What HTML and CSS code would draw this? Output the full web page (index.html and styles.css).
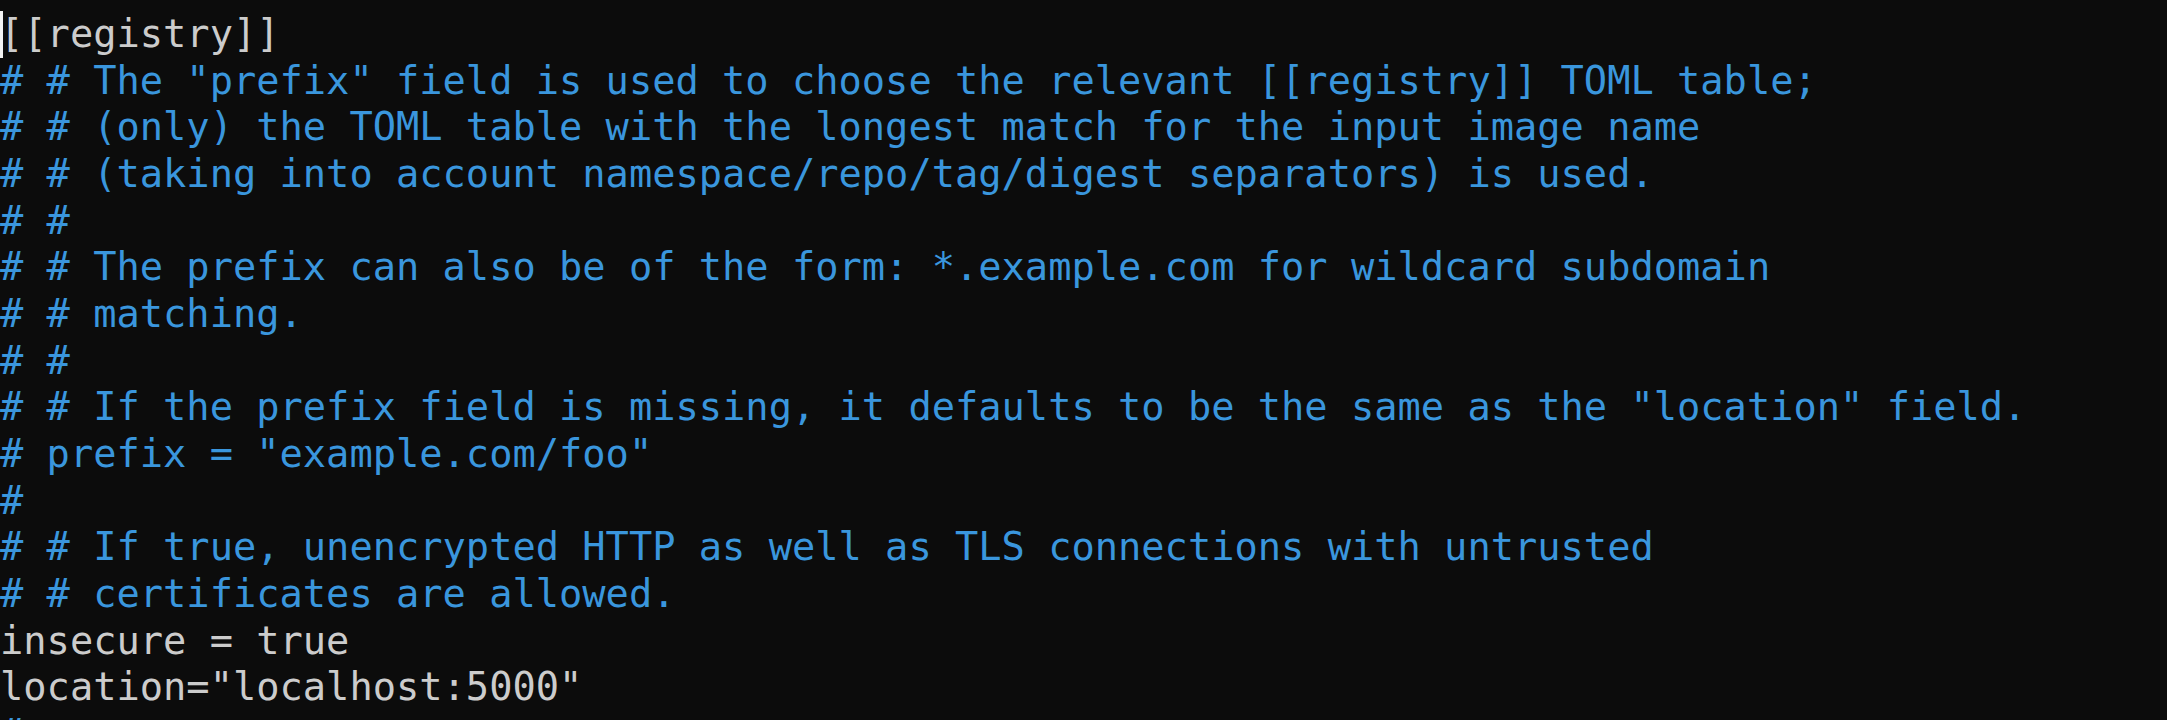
FILE: index.html
```html
<!DOCTYPE html>
<html lang="en">
<head>
<meta charset="utf-8">
<title>registries.conf</title>
<link rel="stylesheet" href="styles.css">
</head>
<body>
<pre class="term"><span class="fg"><span class="cursor">[</span>[registry]]</span>
<span class="cm"># # The "prefix" field is used to choose the relevant [[registry]] TOML table;</span>
<span class="cm"># # (only) the TOML table with the longest match for the input image name</span>
<span class="cm"># # (taking into account namespace/repo/tag/digest separators) is used.</span>
<span class="cm"># #</span>
<span class="cm"># # The prefix can also be of the form: *.example.com for wildcard subdomain</span>
<span class="cm"># # matching.</span>
<span class="cm"># #</span>
<span class="cm"># # If the prefix field is missing, it defaults to be the same as the "location" field.</span>
<span class="cm"># prefix = "example.com/foo"</span>
<span class="cm">#</span>
<span class="cm"># # If true, unencrypted HTTP as well as TLS connections with untrusted</span>
<span class="cm"># # certificates are allowed.</span>
<span class="fg">insecure = true</span>
<span class="fg">location="localhost:5000"</span>
<span class="cm">#</span></pre>
</body>
</html>
```
FILE: styles.css
```css
html, body {
  margin: 0;
  padding: 0;
  background: #0c0c0c;
  overflow: hidden;
  height: 100%;
}

.term {
  margin: 0;
  padding: 11px 0 0 0;
  font-family: "DejaVu Sans Mono", "Liberation Mono", monospace;
  font-size: 38.7px;
  line-height: 46.67px;
  color: #cccccc;
  white-space: pre;
}

.fg {
  color: #cccccc;
}

.cm {
  color: #3a96dd;
}

.cursor {
  display: inline-block;
  box-shadow: inset 3px 0 0 #f2f2f2;
}
```
